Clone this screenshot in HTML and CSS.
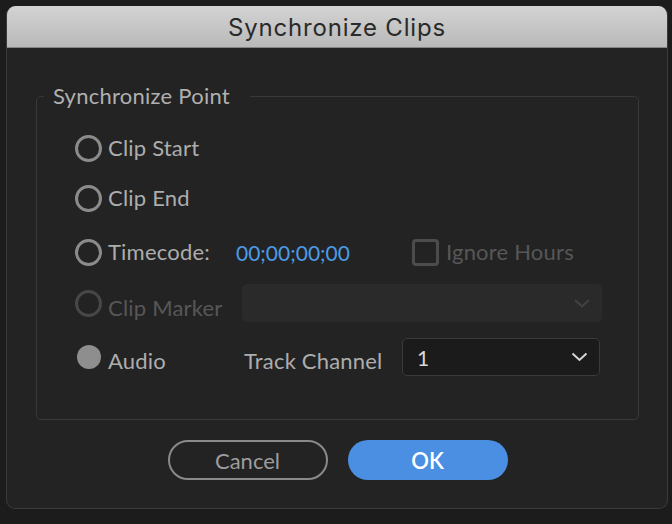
FILE: index.html
```html
<!DOCTYPE html>
<html>
<head>
<meta charset="utf-8">
<link rel="stylesheet" href="styles.css">
</head>
<body>
<div class="dialog">
  <div class="titlebar">Synchronize Clips</div>
  <div class="content">
    <fieldset class="group">
      <legend>Synchronize Point</legend>
      <div class="row r1">
        <span class="opt"><span class="radio"></span><span class="label">Clip Start</span></span>
      </div>
      <div class="row r2">
        <span class="opt"><span class="radio"></span><span class="label">Clip End</span></span>
      </div>
      <div class="row r3">
        <span class="opt w-tc"><span class="radio"></span><span class="label">Timecode:</span></span>
        <span class="timecode">00;00;00;00</span>
        <span class="check"><span class="box"></span><span class="label dim">Ignore Hours</span></span>
      </div>
      <div class="row r4">
        <span class="opt w-cm"><span class="radio off"></span><span class="label dim">Clip Marker</span></span>
        <span class="select disabled">
          <svg class="chev" width="16" height="9" viewBox="0 0 16 9"><path d="M1 1 L8 7.5 L15 1" fill="none" stroke="#434343" stroke-width="1.8"/></svg>
        </span>
      </div>
      <div class="row r5">
        <span class="opt w-au"><span class="radio filled"></span><span class="label">Audio</span></span>
        <span class="label track">Track Channel</span>
        <span class="select track-sel">
          <span class="val">1</span>
          <svg class="chev" width="17" height="10" viewBox="0 0 17 10"><path d="M1.5 1.5 L8.5 8 L15.5 1.5" fill="none" stroke="#d6d6d6" stroke-width="2"/></svg>
        </span>
      </div>
    </fieldset>
    <div class="buttons">
      <button class="btn cancel">Cancel</button>
      <button class="btn ok">OK</button>
    </div>
  </div>
</div>
</body>
</html>
```

FILE: styles.css
```css
html, body {
  margin: 0;
  padding: 0;
}
body {
  width: 672px;
  height: 524px;
  background: #1c1c1c;
  overflow: hidden;
  font-family: Lato, "Open Sans", sans-serif;
}
.dialog {
  margin: 6px 0 0 6px;
  width: 662px;
  height: 503px;
  box-sizing: border-box;
  border-radius: 9px;
  background: #232323;
  border: 1px solid #3a3a3a;
  border-top: none;
  overflow: hidden;
  display: flex;
  flex-direction: column;
}
.titlebar {
  height: 42px;
  flex: none;
  background: linear-gradient(#d3d3d3, #b9b9b9);
  border-bottom: 1px solid #858585;
  box-sizing: border-box;
  display: flex;
  align-items: center;
  justify-content: center;
  font-family: Inter, "Liberation Sans", sans-serif;
  font-size: 24px;
  font-weight: 400;
  letter-spacing: 0.8px;
  color: #2a2a2a;
  padding-top: 1px;
}
.content {
  padding: 36px 28px 0 29px;
  display: flex;
  flex-direction: column;
}
.group {
  margin: 0;
  padding: 0 0 0 38px;
  border: 1.5px solid #383838;
  border-radius: 5px;
  height: 336px;
  box-sizing: border-box;
  min-width: 0;
}
.group legend {
  margin-left: -31px;
  padding: 0 20px 0 9px;
  font-size: 22px;
  letter-spacing: 0.25px;
  color: #b0b0b0;
  line-height: 24px;
}
.row {
  display: flex;
  align-items: center;
  font-size: 22px;
  letter-spacing: 0.2px;
  color: #adadad;
}
.r1 { height: 28px; margin-top: 26px; }
.r2 { height: 28px; margin-top: 22px; }
.r3 { height: 28px; margin-top: 26px; }
.r4 { height: 38px; margin-top: 18px; }
.r5 { height: 38px; margin-top: 16px; }
.opt {
  display: flex;
  align-items: center;
}
.w-tc { width: 161px; }
.w-cm { width: 167px; }
.w-au { width: 169px; }
.radio {
  width: 27px;
  height: 27px;
  box-sizing: border-box;
  border-radius: 50%;
  border: 3.5px solid #8b8b8b;
  margin-right: 6px;
  flex: none;
}
.radio.off {
  border-color: #474747;
}
.radio.filled {
  border: none;
  background: #8e8e8e;
  width: 24px;
  height: 24px;
  margin: 0 7px 0 2px;
}
.label {
  line-height: 28px;
}
.dim {
  color: #575757;
}
.r4 .label { position: relative; top: 5px; }
.r5 .label { position: relative; top: 4px; }
.timecode {
  width: 176px;
  color: #4b9be6;
  font-size: 21px;
  letter-spacing: 0;
}
.check {
  display: flex;
  align-items: center;
}
.box {
  width: 27px;
  height: 27px;
  box-sizing: border-box;
  border: 3px solid #4c4c4c;
  border-radius: 4px;
  margin-right: 7px;
}
.select {
  display: flex;
  align-items: center;
  justify-content: space-between;
  box-sizing: border-box;
  height: 38px;
  border-radius: 5px;
}
.select.disabled {
  width: 360px;
  background: #2a2a2a;
  justify-content: flex-end;
  padding-right: 12px;
}
.label.track {
  width: 158px;
}
.track-sel {
  width: 198px;
  background: #1b1b1b;
  border: 1.5px solid #3b3b3b;
  padding: 0 11px 0 14px;
}
.track-sel .val {
  color: #d8d8d8;
  font-size: 21px;
}
.buttons {
  display: flex;
  justify-content: center;
  gap: 20px;
  margin-top: 20px;
}
.btn {
  width: 160px;
  height: 40px;
  border-radius: 20px;
  box-sizing: border-box;
  font-family: Lato, "Open Sans", sans-serif;
  font-size: 22px;
  padding: 0;
}
.cancel {
  background: transparent;
  border: 2px solid #8a8a8a;
  color: #9d9d9d;
}
.ok {
  background: #4a8fe2;
  border: none;
  color: #ffffff;
  font-weight: 600;
}
```
